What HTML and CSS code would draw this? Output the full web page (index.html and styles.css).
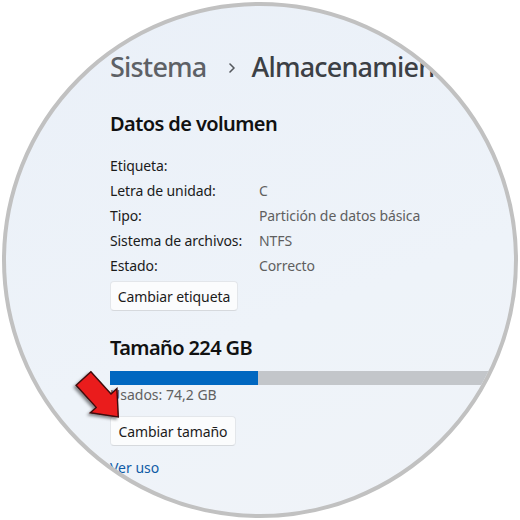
FILE: index.html
```html
<!DOCTYPE html>
<html lang="es">
<head>
<meta charset="utf-8">
<link rel="stylesheet" href="styles.css">
</head>
<body>
<div class="lens">
  <div class="page">
    <div class="crumbs">
      <span class="crumb-prev">Sistema</span>
      <svg class="chev" width="8" height="10" viewBox="0 0 8 10"><path d="M2 1 L6 5 L2 9" fill="none" stroke="#55595e" stroke-width="1.6" stroke-linecap="round" stroke-linejoin="round"/></svg>
      <span class="crumb-cur">Almacenamiento</span>
    </div>
    <h2 class="section-title">Datos de volumen</h2>
    <div class="props">
      <div class="prop"><span class="label">Etiqueta:</span><span class="value"></span></div>
      <div class="prop"><span class="label">Letra de unidad:</span><span class="value">C</span></div>
      <div class="prop"><span class="label">Tipo:</span><span class="value">Partición de datos básica</span></div>
      <div class="prop"><span class="label">Sistema de archivos:</span><span class="value">NTFS</span></div>
      <div class="prop"><span class="label">Estado:</span><span class="value">Correcto</span></div>
    </div>
    <button class="btn btn-label">Cambiar etiqueta</button>
    <h2 class="section-title size-title">Tamaño 224 GB</h2>
    <div class="bar"><div class="bar-used" style="width:148px"></div></div>
    <div class="used">Usados: 74,2 GB</div>
    <button class="btn btn-size">Cambiar tamaño</button>
    <a class="link" href="#">Ver uso</a>
  </div>
  <svg class="arrow" width="508" height="508" viewBox="6 6 508 508">
    <defs>
      <filter id="sh" x="-30%" y="-30%" width="160%" height="160%">
        <feDropShadow dx="-2" dy="2" stdDeviation="1.6" flood-color="#000" flood-opacity="0.45"/>
      </filter>
    </defs>
    <polygon points="90.9,371.8 111,394 116.9,388.6 118.3,417 90.3,412.8 96.2,407.4 76.1,385.2" fill="#ea1b1f" stroke="#3d0808" stroke-width="1.4" stroke-linejoin="miter" filter="url(#sh)"/>
  </svg>
</div>
</body>
</html>
```

FILE: styles.css
```css
html, body {
  margin: 0;
  padding: 0;
  background: #ffffff;
}

.lens {
  position: relative;
  width: 516px;
  height: 516px;
  margin: 2px;
  box-sizing: border-box;
  border: 4px solid #c1c1c1;
  border-radius: 50%;
  overflow: hidden;
  background: linear-gradient(160deg, #eaf0f8 0%, #eef3f9 60%, #f0f3f8 100%);
  font-family: "Noto Sans", "Open Sans", sans-serif;
  color: #1b1b1b;
}

.page {
  padding: 43px 0 0 104px;
  width: 700px;
}

.crumbs {
  display: flex;
  align-items: center;
  height: 36px;
  font-size: 27px;
  line-height: 36px;
  font-weight: 500;
  letter-spacing: -0.8px;
  white-space: nowrap;
}

.crumb-prev {
  color: #5d6166;
}

.chev {
  margin: 0 16px 0 21px;
  position: relative;
  top: 1px;
}

.crumb-cur {
  color: #3c4045;
}

.section-title {
  margin: 25px 0 0 0;
  font-size: 20px;
  line-height: 28px;
  font-weight: 600;
  letter-spacing: -0.6px;
  color: #111111;
}

.props {
  margin-top: 15px;
}

.prop {
  display: flex;
  height: 25px;
  font-size: 14px;
  line-height: 25px;
  letter-spacing: -0.1px;
}

.label {
  width: 149px;
  color: #1b1b1b;
}

.value {
  color: #5f5f5f;
}

.btn {
  display: block;
  box-sizing: border-box;
  height: 30px;
  padding: 0;
  border: 1px solid #e3e6ea;
  border-bottom-color: #d6d9dd;
  border-radius: 4px;
  background: #fbfcfd;
  font-family: inherit;
  font-size: 14px;
  letter-spacing: -0.1px;
  white-space: nowrap;
  text-align: center;
  color: #1b1b1b;
}

.btn-label {
  margin-top: 3px;
  width: 128px;
}

.size-title {
  margin-top: 23px;
}

.bar {
  margin-top: 9px;
  width: 420px;
  height: 14px;
  background: #c3c6ca;
  display: flex;
}

.bar-used {
  height: 100%;
  background: #0067c0;
}

.used {
  font-size: 14px;
  line-height: 20px;
  color: #616161;
}

.btn-size {
  margin-top: 11px;
  width: 126px;
}

.link {
  display: block;
  margin-top: 12px;
  font-size: 14px;
  line-height: 20px;
  color: #0f5ba6;
  text-decoration: none;
}

.arrow {
  position: absolute;
  left: 0;
  top: 0;
  pointer-events: none;
}
```
